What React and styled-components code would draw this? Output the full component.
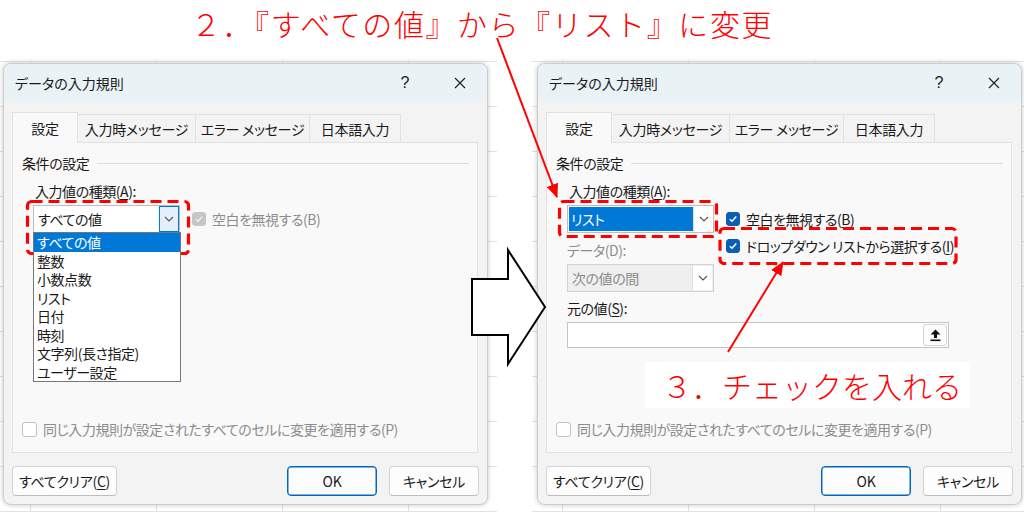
import styled, { createGlobalStyle } from 'styled-components'

const UI = `"Noto Sans CJK JP", "Noto Sans CJK SC", "Noto Sans", sans-serif`

const Global = createGlobalStyle`
  body { margin: 0; background: #fff; }
`

const Page = styled.div`
  position: relative;
  width: 1024px;
  height: 512px;
  overflow: hidden;
  background: #fff;
  font-family: ${UI};
  color: #1a1a1a;
`

const Heading = styled.h1`
  margin: 0;
  height: 60px;
  box-sizing: border-box;
  padding: 4px 0 0 191px;
  font-size: 30px;
  font-weight: 300;
  line-height: 38px;
  letter-spacing: 1.6px;
  color: #ff0000;
  white-space: nowrap;
`

const Shots = styled.div`
  display: flex;
  justify-content: space-between;
  height: 452px;
`

const Shot = styled.div`
  width: ${p => p.$w}px;
  height: 100%;
  box-sizing: border-box;
  padding: 3px 0 0 ${p => p.$inset}px;
  background-color: #fff;
  background-image:
    linear-gradient(#e2e2e2 1px, transparent 1px),
    linear-gradient(90deg, #e2e2e2 1px, transparent 1px);
  background-size: 126px 45px;
  background-position: 30px 1px;
`

const Dialog = styled.div`
  width: 485px;
  height: 442px;
  box-sizing: border-box;
  border: 1px solid #cdcdcd;
  border-radius: 8px;
  overflow: hidden;
  background: #f3f3f3;
  box-shadow: 0 0 5px rgba(0, 0, 0, 0.22);
  display: flex;
  flex-direction: column;
`

const TitleBar = styled.div`
  height: 37px;
  flex-shrink: 0;
  display: flex;
  align-items: center;
  padding: 0 21px 0 11px;
  background: #e9f3f6;
  font-size: 14px;
  font-feature-settings: "palt";
`

const Title = styled.div`
  flex: 1;
`

const Help = styled.span`
  width: 20px;
  margin-right: 39px;
  text-align: center;
  font-family: "Liberation Sans", sans-serif;
  font-size: 16px;
  color: #222;
`

const Tabs = styled.div`
  display: flex;
  align-items: flex-end;
  height: 30px;
  margin: 11px 0 0 8px;
`

const Tab = styled.div`
  position: relative;
  z-index: ${p => (p.$active ? 1 : 0)};
  width: ${p => p.$w}px;
  height: ${p => (p.$active ? 31 : 28)}px;
  margin-bottom: ${p => (p.$active ? -1 : 0)}px;
  margin-right: -1px;
  box-sizing: border-box;
  display: flex;
  align-items: center;
  justify-content: center;
  border: 1px solid #e1e1e1;
  border-bottom: none;
  background: ${p => (p.$active ? '#f9f9f9' : '#f3f3f3')};
  font-size: 14px;
  letter-spacing: -0.3px;
  font-feature-settings: "palt";
  padding-bottom: ${p => (p.$active ? 1 : 0)}px;
`

const Panel = styled.div`
  width: 466px;
  height: 311px;
  margin-left: 8px;
  box-sizing: border-box;
  padding: 11px 8px 0 9px;
  border: 1px solid #e1e1e1;
  background: #f9f9f9;
  display: flex;
  flex-direction: column;
  font-size: 14px;
  letter-spacing: -0.45px;
  font-feature-settings: "palt";
`

const GroupHeader = styled.div`
  display: flex;
  align-items: center;
  height: 18px;
  gap: 8px;
  &::after {
    content: '';
    flex: 1;
    height: 1px;
    background: #dcdcdc;
  }
`

const FieldLabel = styled.div`
  height: 18px;
  line-height: 18px;
  margin: ${p => p.$mt ?? 10}px 0 0 ${p => p.$ml ?? 13}px;
  color: ${p => (p.$disabled ? '#8c8c8c' : '#1a1a1a')};
`

const Key = styled.span`
  text-decoration: underline;
  text-underline-offset: 2px;
`

const Row = styled.div`
  display: flex;
  align-items: flex-start;
  gap: 12px;
  margin: 5px 0 0 11px;
`

const Column = styled.div`
  display: flex;
  flex-direction: column;
`

const Combo = styled.div`
  position: relative;
  width: 147px;
  height: 28px;
  flex-shrink: 0;
  box-sizing: border-box;
  display: flex;
  margin-top: ${p => p.$mt ?? 0}px;
  border: 1px solid ${p => (p.$disabled ? '#d2d2d2' : '#bcbcbc')};
  background: ${p => (p.$disabled ? '#efefef' : '#fff')};
`

const ComboValue = styled.div`
  flex: 1;
  display: flex;
  align-items: center;
  margin: ${p => (p.$selected ? '1px 0 1px 1px' : '0')};
  padding-left: ${p => (p.$selected ? 2 : 4)}px;
  background: ${p => (p.$selected ? '#0078d7' : 'transparent')};
  color: ${p => (p.$selected ? '#fff' : p.$disabled ? '#8c8c8c' : '#1a1a1a')};
`

const ComboButton = styled.div`
  width: 20px;
  display: flex;
  align-items: center;
  justify-content: center;
  box-sizing: border-box;
  border-left: 1px solid ${p => (p.$focus ? '#0078d7' : '#dedede')};
  ${p => p.$focus && 'border: 1px solid #0078d7; background: #e3effa;'}
  ${p => p.$disabled && 'background: #fff; margin: 1px;'}
`

const ListBox = styled.ul`
  position: absolute;
  top: 100%;
  left: -1px;
  z-index: 2;
  width: 148px;
  margin: 0;
  padding: 0;
  list-style: none;
  box-sizing: border-box;
  border: 1px solid #777;
  background: #fff;
`

const ListItem = styled.li`
  height: 18.5px;
  line-height: 18.5px;
  padding-left: 3px;
  background: ${p => (p.$selected ? '#0078d7' : 'transparent')};
  color: ${p => (p.$selected ? '#fff' : '#1a1a1a')};
`

const CheckRow = styled.label`
  display: flex;
  align-items: center;
  gap: 6px;
  height: 27px;
  white-space: nowrap;
  color: ${p => (p.$disabled ? '#8c8c8c' : '#1a1a1a')};
`

const Box = styled.span`
  width: ${p => p.$size ?? 14}px;
  height: ${p => p.$size ?? 14}px;
  flex-shrink: 0;
  box-sizing: border-box;
  border-radius: 3px;
  display: flex;
  align-items: center;
  justify-content: center;
  background: ${p => (p.$state === 'on' ? '#0a5fb4' : p.$state === 'dim' ? '#c6c6c6' : '#fff')};
  border: 1px solid ${p => (p.$state === 'on' ? '#0a5fb4' : p.$state === 'dim' ? '#c6c6c6' : '#c2c2c2')};
`

const SourceInput = styled.div`
  width: 382px;
  height: 26px;
  margin: 5px 0 0 11px;
  box-sizing: border-box;
  border: 1px solid #c4c4c4;
  background: #fff;
  display: flex;
  justify-content: flex-end;
`

const CollapseButton = styled.div`
  width: 24px;
  margin: 1px;
  box-sizing: border-box;
  border: 1px solid #d4d4d4;
  border-radius: 3px;
  background: #fdfdfd;
  display: flex;
  align-items: center;
  justify-content: center;
`

const BottomCheck = styled(CheckRow)`
  margin-top: auto;
  margin-bottom: 14px;
  height: 18px;
`

const Footer = styled.div`
  display: flex;
  padding: 13px 8px 0;
`

const Button = styled.button`
  width: ${p => p.$w}px;
  height: 30px;
  margin-left: ${p => p.$ml ?? 0};
  box-sizing: border-box;
  border: 1px solid ${p => (p.$primary ? '#0067c0' : '#d3d3d3')};
  border-bottom-color: ${p => (p.$primary ? '#0067c0' : '#bdbdbd')};
  box-shadow: ${p => (p.$primary ? 'inset 0 0 0 0.5px #0067c0' : 'none')};
  border-radius: 4px;
  background: #fdfdfd;
  font-family: ${UI};
  font-size: 14px;
  letter-spacing: -0.3px;
  font-feature-settings: "palt";
  color: #1a1a1a;
  padding: 0;
`

const Callout = styled.div`
  position: absolute;
  left: 645px;
  top: 362px;
  width: 325px;
  height: 46px;
  box-sizing: border-box;
  padding-left: 17px;
  background: #fff;
  color: #ff0000;
  font-size: 30px;
  font-weight: 300;
  line-height: 46px;
  white-space: nowrap;
`

const Overlay = styled.svg`
  position: absolute;
  left: 0;
  top: 0;
  pointer-events: none;
`

const Chevron = () => (
  <svg width="10" height="6" viewBox="0 0 10 6">
    <path d="M1 1 L5 5 L9 1" fill="none" stroke="#555" strokeWidth="1.1" />
  </svg>
)

const Tick = ({ color = '#fff' }) => (
  <svg width="10" height="10" viewBox="0 0 10 10">
    <path d="M1.8 5.2 L4 7.3 L8.3 2.6" fill="none" stroke={color} strokeWidth="1.5" />
  </svg>
)

const CloseIcon = () => (
  <svg width="12" height="12" viewBox="0 0 12 12">
    <path d="M1 1 L11 11 M11 1 L1 11" stroke="#222" strokeWidth="1.2" />
  </svg>
)

const UploadIcon = () => (
  <svg width="11" height="13" viewBox="0 0 11 13">
    <path d="M5.5 0.5 L10.5 5.5 L7 5.5 L7 9 L4 9 L4 5.5 L0.5 5.5 Z" fill="#111" />
    <rect x="0.5" y="10.5" width="10" height="1.6" fill="#111" />
  </svg>
)

const TABS = [
  ['設定', 66],
  ['入力時メッセージ', 119],
  ['エラー メッセージ', 115],
  ['日本語入力', 92],
]

const TYPES = ['すべての値', '整数', '小数点数', 'リスト', '日付', '時刻', '文字列(長さ指定)', 'ユーザー設定']

function Frame({ children }) {
  return (
    <Dialog>
      <TitleBar>
        <Title>データの入力規則</Title>
        <Help>?</Help>
        <CloseIcon />
      </TitleBar>
      <Tabs>
        {TABS.map(([label, w], i) => (
          <Tab key={label} $w={w} $active={i === 0}>{label}</Tab>
        ))}
      </Tabs>
      <Panel>
        <GroupHeader>条件の設定</GroupHeader>
        <FieldLabel>入力値の種類(<Key>A</Key>):</FieldLabel>
        {children}
        <BottomCheck $disabled>
          <Box $size={15} />
          <span>同じ入力規則が設定されたすべてのセルに変更を適用する(P)</span>
        </BottomCheck>
      </Panel>
      <Footer>
        <Button $w={105}>すべてクリア(<Key>C</Key>)</Button>
        <Button $w={90} $ml="auto" $primary>OK</Button>
        <Button $w={90} $ml="12px">キャンセル</Button>
      </Footer>
    </Dialog>
  )
}

export default function App() {
  return (
    <Page>
      <Global />
      <Heading>２．『すべての値』から『リスト』に変更</Heading>
      <Shots>
        <Shot $w={497} $inset={3}>
          <Frame>
            <Row>
              <Combo>
                <ComboValue>すべての値</ComboValue>
                <ComboButton $focus><Chevron /></ComboButton>
                <ListBox>
                  {TYPES.map((t, i) => (
                    <ListItem key={t} $selected={i === 0}>{t}</ListItem>
                  ))}
                </ListBox>
              </Combo>
              <Column>
                <CheckRow $disabled>
                  <Box $state="dim"><Tick color="#eee" /></Box>
                  <span>空白を無視する(B)</span>
                </CheckRow>
              </Column>
            </Row>
          </Frame>
        </Shot>
        <Shot $w={492} $inset={5}>
          <Frame>
            <Row>
              <Column>
                <Combo>
                  <ComboValue $selected>リスト</ComboValue>
                  <ComboButton><Chevron /></ComboButton>
                </Combo>
                <FieldLabel $mt={8} $ml={0} $disabled>データ(D):</FieldLabel>
                <Combo $mt={5} $disabled>
                  <ComboValue $disabled>次の値の間</ComboValue>
                  <ComboButton $disabled><Chevron /></ComboButton>
                </Combo>
              </Column>
              <Column>
                <CheckRow>
                  <Box $state="on"><Tick /></Box>
                  <span>空白を無視する(<Key>B</Key>)</span>
                </CheckRow>
                <CheckRow>
                  <Box $state="on"><Tick /></Box>
                  <span>ドロップダウン リストから選択する(<Key>I</Key>)</span>
                </CheckRow>
              </Column>
            </Row>
            <FieldLabel $mt={7} $ml={11}>元の値(<Key>S</Key>):</FieldLabel>
            <SourceInput>
              <CollapseButton><UploadIcon /></CollapseButton>
            </SourceInput>
          </Frame>
        </Shot>
      </Shots>

      <Callout>３．チェックを入れる</Callout>

      <Overlay width="1024" height="512" viewBox="0 0 1024 512">
        <defs>
          <marker id="head" markerUnits="userSpaceOnUse" markerWidth="14" markerHeight="12"
            viewBox="0 0 14 12" refX="13" refY="6" orient="auto">
            <path d="M0 0 L14 6 L0 12 Z" fill="#ff0000" />
          </marker>
        </defs>
        <g fill="none" stroke="#ff0000" strokeWidth="3.2" strokeDasharray="11 6">
          <rect x="27.5" y="201.5" width="161" height="52" rx="4" />
          <rect x="559.5" y="201.5" width="157" height="35" rx="4" />
          <rect x="720" y="228.5" width="236" height="35" rx="4" />
        </g>
        <line x1="497" y1="38" x2="557" y2="197" stroke="#ff0000" strokeWidth="2" markerEnd="url(#head)" />
        <line x1="728" y1="352" x2="783" y2="262" stroke="#ff0000" strokeWidth="2" markerEnd="url(#head)" />
        <polygon points="472,279 508,279 508,250 545,307 508,364 508,335 472,335"
          fill="#fff" stroke="#000" strokeWidth="2" strokeLinejoin="miter" />
      </Overlay>
    </Page>
  )
}
